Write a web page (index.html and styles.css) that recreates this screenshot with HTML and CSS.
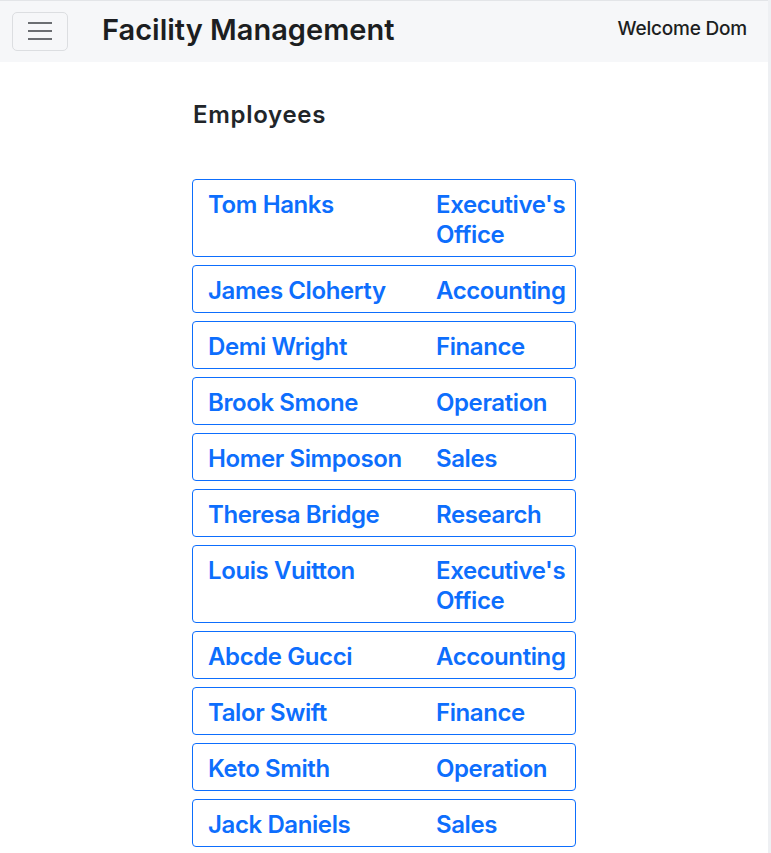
FILE: index.html
```html
<!DOCTYPE html>
<html lang="en">
<head>
<meta charset="utf-8">
<title>Facility Management</title>
<link rel="stylesheet" href="styles.css">
</head>
<body>
<div class="page">
  <nav class="navbar">
    <button class="toggler" type="button" aria-label="Toggle navigation">
      <svg width="26" height="20" viewBox="0 0 26 20" aria-hidden="true">
        <path d="M1 2h24M1 10h24M1 18h24" stroke="#6b6e72" stroke-width="2" fill="none"/>
      </svg>
    </button>
    <span class="brand">Facility Management</span>
    <span class="welcome">Welcome Dom</span>
  </nav>
  <main class="content">
    <h4 class="heading">Employees</h4>
    <ul class="list">
      <li class="card"><a class="name" href="#">Tom Hanks</a><a class="dept" href="#">Executive's Office</a></li>
      <li class="card"><a class="name" href="#">James Cloherty</a><a class="dept" href="#">Accounting</a></li>
      <li class="card"><a class="name" href="#">Demi Wright</a><a class="dept" href="#">Finance</a></li>
      <li class="card"><a class="name" href="#">Brook Smone</a><a class="dept" href="#">Operation</a></li>
      <li class="card"><a class="name" href="#">Homer Simposon</a><a class="dept" href="#">Sales</a></li>
      <li class="card"><a class="name" href="#">Theresa Bridge</a><a class="dept" href="#">Research</a></li>
      <li class="card"><a class="name" href="#">Louis Vuitton</a><a class="dept" href="#">Executive's Office</a></li>
      <li class="card"><a class="name" href="#">Abcde Gucci</a><a class="dept" href="#">Accounting</a></li>
      <li class="card"><a class="name" href="#">Talor Swift</a><a class="dept" href="#">Finance</a></li>
      <li class="card"><a class="name" href="#">Keto Smith</a><a class="dept" href="#">Operation</a></li>
      <li class="card"><a class="name" href="#">Jack Daniels</a><a class="dept" href="#">Sales</a></li>
    </ul>
  </main>
</div>
</body>
</html>
```

FILE: styles.css
```css
html {
  background: #eef0f3;
}
body {
  margin: 0;
  font-family: Inter, "Noto Sans", sans-serif;
  color: #212529;
}
.page {
  margin-right: 3px;
  background: #ffffff;
  min-height: 853px;
}
.navbar {
  height: 62px;
  box-sizing: border-box;
  border-top: 1px solid #e3e5e8;
  background: #f6f7f9;
  display: flex;
  align-items: center;
  padding: 0 21px 0 12px;
}
.toggler {
  width: 56px;
  height: 39px;
  box-sizing: border-box;
  border: 1px solid #dcdee1;
  border-radius: 5px;
  background: transparent;
  display: flex;
  align-items: center;
  justify-content: center;
  padding: 0;
  margin-top: -1px;
}
.brand {
  margin-left: 34px;
  margin-bottom: 5px;
  font-size: 29px;
  font-weight: 600;
  letter-spacing: 0;
  color: #1c1e21;
}
.welcome {
  margin-left: auto;
  margin-bottom: 6px;
  font-size: 19px;
  font-weight: 500;
  letter-spacing: -0.2px;
  color: #1c1e21;
}
.content {
  width: 384px;
  margin: 0 auto;
  padding-top: 40px;
}
.heading {
  margin: 0 0 51px 1px;
  font-size: 24px;
  line-height: 26px;
  font-weight: 600;
  letter-spacing: 0.7px;
}
.list {
  list-style: none;
  margin: 0;
  padding: 0;
  display: flex;
  flex-direction: column;
  gap: 8px;
}
.card {
  border: 1px solid #0d6efd;
  border-radius: 4px;
  padding: 10px 4px 6px 15px;
  display: grid;
  grid-template-columns: 228px 1fr;
  font-size: 24px;
  line-height: 30px;
  font-weight: 600;
  letter-spacing: -0.4px;
}
.name,
.dept {
  color: #0d6efd;
  text-decoration: none;
}
```
